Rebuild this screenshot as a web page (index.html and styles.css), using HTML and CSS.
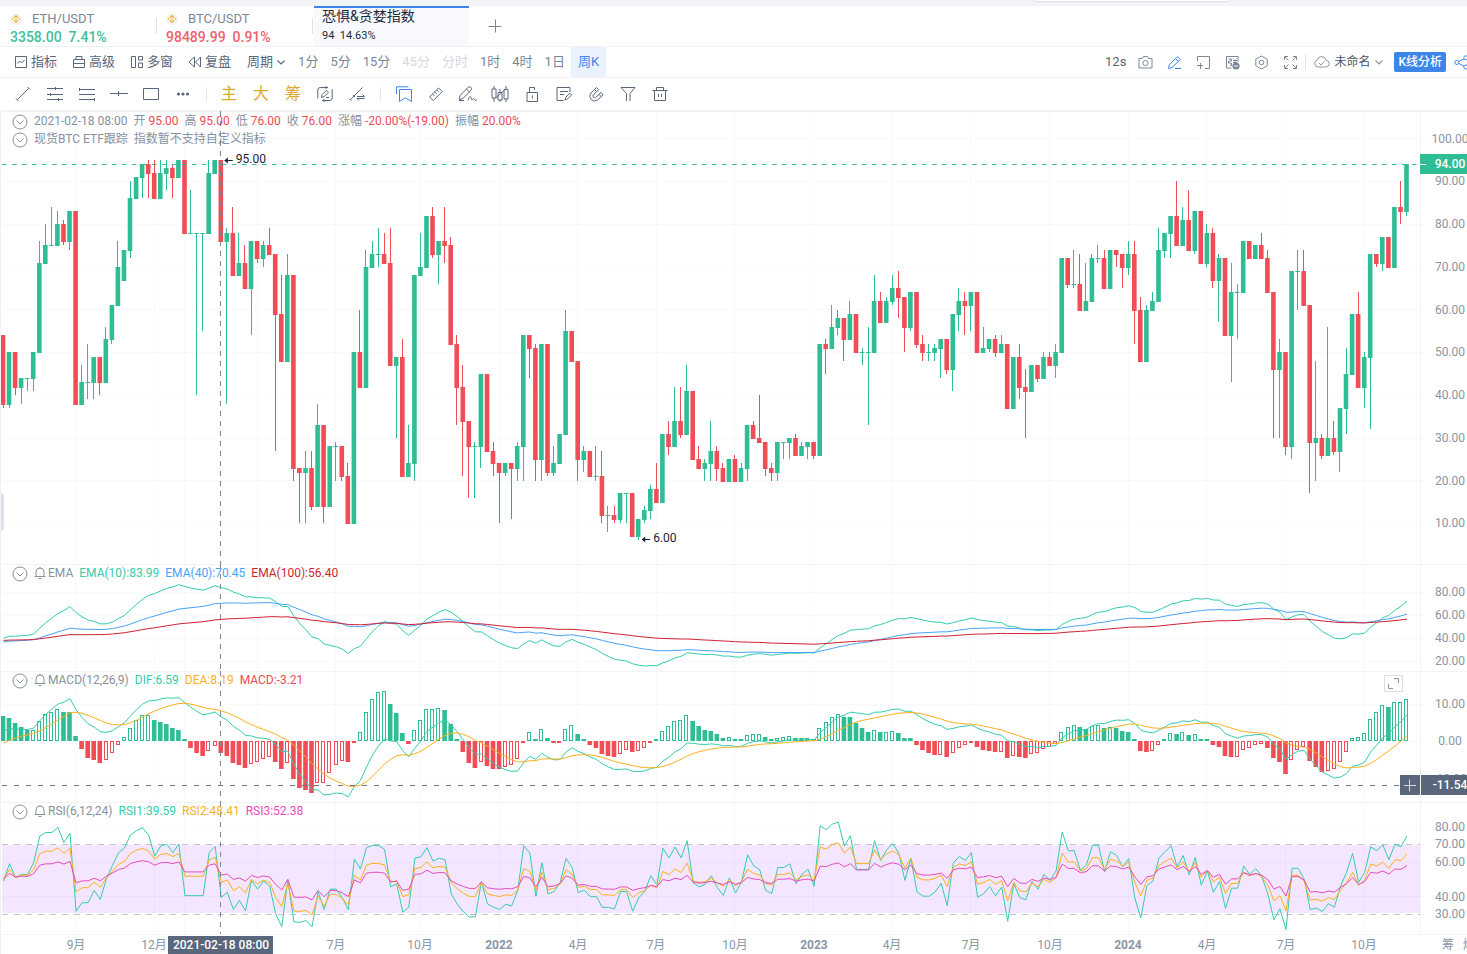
FILE: index.html
```
<!DOCTYPE html>
<html lang="zh-CN">
<head>
<meta charset="utf-8">
<title>恐惧&amp;贪婪指数</title>
<link rel="stylesheet" href="styles.css">
</head>
<body>
<svg class="defs" aria-hidden="true">
  <symbol id="coin" viewBox="0 0 12 12"><circle cx="6" cy="6" r="6" fill="#f3f4f6"/><path d="M3.800 4.700 6 2.700l2.200 2M3.800 7.300 6 9.300l2.200-2M1.900 6h1.300M8.800 6h1.300" fill="none" stroke="#f5b52e" stroke-width="1.300"/><path d="M6 4.900 7.100 6 6 7.100 4.900 6z" fill="#f5b52e"/></symbol>
  <symbol id="fold" viewBox="0 0 16 16"><circle cx="8" cy="8" r="7"/><path d="M4.500 6.500 8 10l3.500-3.500"/></symbol>
  <symbol id="bell" viewBox="0 0 12 14"><path d="M.5 10.500h11M2 10.500V6a4 4 0 0 1 8 0v4.500M4.500 12.500h3M6 .8V2"/></symbol>
  <symbol id="down" viewBox="0 0 10 10"><path d="M1.500 3.500 5 7l3.500-3.500"/></symbol>
</svg>

<div class="strip"><div class="strip-box"></div></div>

<nav class="tabs">
  <a class="tab" href="#"><span class="name"><svg class="coin"><use href="#coin"/></svg>ETH/USDT</span><span class="quote up">3358.00  7.41%</span></a>
  <a class="tab" href="#"><span class="name"><svg class="coin"><use href="#coin"/></svg>BTC/USDT</span><span class="quote down">98489.99  0.91%</span></a>
  <a class="tab active" href="#"><span class="title">恐惧&amp;贪婪指数</span><span class="sub">94&nbsp; 14.63%</span></a>
  <button class="add" aria-label="添加"><svg viewBox="0 0 14 14"><path d="M7.500 .5v13M.5 7.500h13"/></svg></button>
</nav>

<div class="bar">
  <div class="tools">
    <button><svg class="i" viewBox="0 0 14 14"><path d="M1.500 1.500h11v11h-11zM3.500 8.500l2-2.500 2 2 3-3"/></svg>指标</button>
    <button><svg class="i" viewBox="0 0 14 14"><path d="M1.500 4.500h11v8h-11zM4 4.500v-3h6v3M1.500 8.500h11"/></svg>高级</button>
    <button><svg class="i" viewBox="0 0 14 14"><path d="M1.500 1.500h4v11h-4zM8.500 1.500h4v3.500h-4zM8.500 8h4v4.500h-4z"/></svg>多窗</button>
    <button><svg class="i" viewBox="0 0 14 14"><path d="M6.500 2v10L1 7zM12.500 2v10L7.500 7z"/></svg>复盘</button>
    <button>周期<svg class="chev" viewBox="0 0 10 10"><use href="#down"/></svg></button>
  </div>
  <div class="periods">
    <button>1分</button><button>5分</button><button>15分</button><button disabled>45分</button><button disabled>分时</button><button>1时</button><button>4时</button><button>1日</button><button class="on">周K</button>
  </div>
  <div class="right">
    <span class="timer">12s</span>
    <button aria-label="截图"><svg class="r" viewBox="0 0 15 15"><path d="M1 3.500h3.500l1-2h4l1 2H14v9.500H1z"/><circle cx="7.500" cy="8" r="2.600"/></svg></button>
    <button aria-label="画线"><svg class="r blue" viewBox="0 0 15 15"><path d="M1.500 13.500l.8-3.700L10.500 1.600l2.800 2.800-8.200 8.200zM8.500 3.600l2.800 2.800M8 13.500h6"/></svg></button>
    <button aria-label="新增窗口"><svg class="r" viewBox="0 0 15 15"><path d="M1.500 6.500V1.500h12v12H9M1 10.500h6M4.500 8v6"/></svg></button>
    <button aria-label="弹幕"><svg class="r" viewBox="0 0 15 15"><path d="M6.500 13H1.500V1.500h11.500V7M3.500 4h3v2h-3v2h3v2.500H5M8 3.500l1 1M11.500 3.500l-1 1M8 5.500h4M8 7.500h4M10 5v5"/><circle cx="11" cy="11" r="3.600" fill="#7d8797" stroke="none"/><path d="M9 11h4" stroke="#fff"/></svg></button>
    <button aria-label="设置"><svg class="r" viewBox="0 0 15 15"><path d="M7.500 1l5.700 3.200v6.600L7.500 14l-5.700-3.200V4.200z"/><circle cx="7.500" cy="7.500" r="2.300"/></svg></button>
    <button aria-label="全屏"><svg class="r" viewBox="0 0 15 15"><path d="M1.500 5V1.500H5M2 2l3.500 3.500M13.500 5V1.500H10M13 2 9.500 5.500M1.500 10v3.500H5M2 13l3.500-3.500M13.500 10v3.500H10M13 13 9.500 9.500"/></svg></button>
    <span class="rule"></span>
    <button class="layout"><svg class="cloud" viewBox="0 0 17 14"><path d="M5 12a3.600 3.600 0 0 1-.8-7A4.500 4.500 0 0 1 13 5.200 3.400 3.400 0 0 1 12.600 12zM6 8l2 2 3.500-3.500"/></svg>未命名<svg class="chev" viewBox="0 0 10 10"><use href="#down"/></svg></button>
    <button class="primary">K线分析</button>
    <button class="share" aria-label="分享"><svg class="r blue" viewBox="0 0 15 15"><circle cx="2.800" cy="7.500" r="2"/><circle cx="11.800" cy="2.800" r="2"/><circle cx="11.800" cy="12" r="2"/><path d="M4.600 6.600 10 3.700M4.600 8.400l5.400 2.700"/></svg></button>
  </div>
</div>

<div class="bar draw">
  <button aria-label="线段"><svg viewBox="0 0 16 16"><path d="M2.500 13.500l11-11M1 12.500 3.500 15M12.500 1 15 3.500"/></svg></button>
  <button aria-label="水平线"><svg viewBox="0 0 16 16"><path d="M0 2.500h16M0 8.500h16M0 13.500h16M8.500 1v3M3.500 7v3M11.500 12v3"/></svg></button>
  <button aria-label="射线"><svg viewBox="0 0 16 16"><path d="M0 3.500h16M0 8.500h16M0 13.500h16M.5 2v3M15.500 12v3"/></svg></button>
  <button aria-label="横线"><svg viewBox="0 0 18 16"><path d="M0 7.500h18M8.500 5v5"/></svg></button>
  <button aria-label="矩形"><svg viewBox="0 0 16 16"><path d="M.5 2.500h15v11H.5z"/></svg></button>
  <button aria-label="更多"><svg viewBox="0 0 16 16"><g fill="#59667b" stroke="none"><circle cx="3.500" cy="8" r="1.600"/><circle cx="8" cy="8" r="1.600"/><circle cx="12.500" cy="8" r="1.600"/></g></svg></button>
  <span class="rule"></span>
  <button class="gold">主</button><button class="gold">大</button><button class="gold">筹</button>
  <button aria-label="更新画线"><svg viewBox="0 0 16 16"><path d="M.8 11V4a2.500 2.500 0 0 1 2.500-2.500H11M9 0v3M15.200 5v7a2.500 2.500 0 0 1-2.500 2.500H5M7 13v3M.8 11v1.500M15.200 5V3.500M4.500 11.500l.5-2.700L9.500 4.300l2 2L7 10.800zM9 11.500h3"/></svg></button>
  <button aria-label="切换线"><svg viewBox="0 0 16 16"><path d="M1.500 13.500l12-12M0 12.500 2.500 15M4 9l2 2M8 10.500h7.500L13.500 8.500M15.500 12.500H8l2 2"/></svg></button>
  <span class="rule"></span>
  <button aria-label="收藏"><svg class="blue" viewBox="0 0 16 16"><path d="M.5 8V.8h12M3.500 3.500h12v12L9.500 11.800l-6 3.700z"/></svg></button>
  <button aria-label="测量"><svg viewBox="0 0 16 16"><path d="M1.500 11 10.500 2l3.800 3.500-9 9zM4.500 8l1.800 1.800M6.700 6l1.800 1.800M9 4l1.800 1.800"/></svg></button>
  <button aria-label="画笔"><svg viewBox="0 0 18 16"><path d="M0 14l1.300-4.800L9 1.500a2 2 0 0 1 3 2.700L4.500 12zM7.500 3.300l2.700 2.500M0 14.500h5M9 14.500c1-4 2.500-5 3-3s.5 3 1.500 2 1.500-1 2 0 1 1 2.500.3"/></svg></button>
  <button aria-label="K线样式"><svg viewBox="0 0 18 16"><path d="M1 3h4v9H1zM7 6.500h4V14H7zM13 3.500h4V13h-4zM3 0v3M3 12v4M9 3v3.500M9 14v2M15 0v3.500M15 13v3M5 12l9-8.500"/></svg></button>
  <button aria-label="锁定"><svg viewBox="0 0 16 16"><path d="M3 6.500h10.500v9H3zM5.500 6.500v-5h5v2.500M8.300 9.500v3"/></svg></button>
  <button aria-label="编辑"><svg viewBox="0 0 16 16"><path d="M7.500 14.500H1v-13h13V6M4 5.500h8M4 8.500h4M9 14l.8-2.800 4-4 1.700 1.700-4 4z"/></svg></button>
  <button aria-label="磁铁"><svg viewBox="0 0 16 16"><path d="M8.500 1.500 3 7a4.800 4.800 0 0 0 6.500 7L15 8.800l-2-2.300-5.500 5a1.700 1.700 0 0 1-2.300-2.400l5.400-5.400zM11 8.300l2 2.200M6.500 3.500l2.200 2.200"/></svg></button>
  <button aria-label="筛选"><svg viewBox="0 0 16 16"><path d="M1 1.500h14l-5 6V15M1 1.500l5.500 6V15"/></svg></button>
  <button aria-label="删除"><svg viewBox="0 0 16 16"><path d="M.5 4.500h15M2.500 4.500v10h11v-10M4.500 4.500v-3h7v3M6.500 8v3M9.500 8v3"/></svg></button>
</div>

<main class="chart" id="chart">
  <section class="pane price" data-base="453">
    <svg class="plot"></svg>
    <div class="legend"><svg class="fold"><use href="#fold"/></svg><span class="g">2021-02-18 08:00</span><span class="g">开 <b class="down">95.00</b></span><span class="g">高 <b class="down">95.00</b></span><span class="g">低 <b class="down">76.00</b></span><span class="g">收 <b class="down">76.00</b></span><span class="g">涨幅 <b class="down">-20.00%(-19.00)</b></span><span class="g">振幅 <b class="down">20.00%</b></span></div>
    <div class="legend"><svg class="fold"><use href="#fold"/></svg><span class="g">现货BTC ETF跟踪</span><span class="g">指数暂不支持自定义指标</span></div>
  </section>
  <section class="pane ema" data-base="107">
    <svg class="plot"></svg>
    <div class="legend"><svg class="fold"><use href="#fold"/></svg><svg class="bell"><use href="#bell"/></svg><span class="g">EMA</span><span class="g teal">EMA(10):83.99</span><span class="g sky">EMA(40):70.45</span><span class="g crimson">EMA(100):56.40</span></div>
  </section>
  <section class="pane macd" data-base="131">
    <svg class="plot"></svg>
    <div class="legend"><svg class="fold"><use href="#fold"/></svg><svg class="bell"><use href="#bell"/></svg><span class="g">MACD(12,26,9)</span><span class="g teal">DIF:6.59</span><span class="g orange">DEA:8.19</span><span class="g down">MACD:-3.21</span></div>
    <button class="expand" aria-label="放大"><svg viewBox="0 0 17 15"><path d="M9 2.500h4.500V7M3.500 8v4.500H8"/></svg></button>
  </section>
  <section class="pane rsi" data-base="132">
    <svg class="plot"></svg>
    <div class="legend"><svg class="fold"><use href="#fold"/></svg><svg class="bell"><use href="#bell"/></svg><span class="g">RSI(6,12,24)</span><span class="g teal">RSI1:39.59</span><span class="g orange">RSI2:48.41</span><span class="g pink">RSI3:52.38</span></div>
  </section>
  <section class="pane time" data-base="20">
    <svg class="plot"></svg>
  </section>
  <div class="handle"></div>
</main>
<script src="chart.js"></script>
</body>
</html>
```

FILE: styles.css
```
* { box-sizing: border-box; }
body {
  margin: 0;
  height: 100vh;
  display: flex;
  flex-direction: column;
  overflow: hidden;
  background: #fff;
  color: #59667b;
  font: 12px/18px Roboto, "Noto Sans CJK SC", sans-serif;
}
button {
  margin: 0;
  padding: 0;
  border: 0;
  background: none;
  color: inherit;
  font: inherit;
  white-space: nowrap;
}
a { color: inherit; text-decoration: none; }
svg { flex: none; fill: none; stroke: currentColor; }
.defs { position: absolute; width: 0; height: 0; }

.strip { flex: none; height: 6px; background: #f2f4f8; }
.strip-box { width: 196px; height: 2px; margin-left: 1033px; background: #fff; border: solid #dde0e6; border-width: 0 1px 1px; border-radius: 0 0 3px 3px; }

.tabs { flex: none; display: flex; height: 41px; border-bottom: 1px solid #eff1f4; }
.tab { display: flex; flex-direction: column; width: 156px; padding: 3px 0 0 10px; position: relative; }
.tab:not(.active)::after { content: ""; position: absolute; right: -1px; top: 12px; height: 16px; border-right: 1px solid #dfe2e8; }
.name { display: flex; align-items: center; height: 19px; font-size: 13px; color: #7b8697; }
.coin { width: 12px; height: 12px; margin-right: 10px; stroke: none; }
.quote { font-size: 14px; font-weight: 500; white-space: pre; }
.tab .up { color: #3fc09b; }
.tab .down { color: #f0616b; }
.tab.active { width: 155px; margin-left: 2px; padding: 0 0 0 8px; background: #f7f9fc; border-top: 2px solid #3c86ea; color: #1f2b3d; }
.title { font-size: 14px; line-height: 17px; }
.sub { font-size: 11px; line-height: 22px; }
.add { margin-left: 19px; width: 14px; color: #7b8697; }
.add svg { display: block; width: 14px; height: 14px; }

.bar { flex: none; display: flex; align-items: stretch; height: 31px; border-bottom: 1px solid #eff1f4; font-size: 13px; }
.bar button { display: flex; align-items: center; }
.tools { display: flex; gap: 15px; padding-left: 14px; }
.tools button { gap: 3px; }
.tools button:last-child { margin-left: 1px; }
.i { width: 14px; height: 14px; }
.chev { width: 10px; height: 10px; stroke-width: 1.2; }
.periods { display: flex; margin-left: 6px; color: #7b8697; }
.periods button { padding: 0 6px; }
.periods button:disabled { color: #d5d8dd; }
.periods .on { padding: 0 7px; background: #eaf2fd; color: #3c86ea; }
.right { display: flex; align-items: center; gap: 14px; margin: 0 -2px 0 auto; color: #7d8797; }
.timer { color: #59667b; margin-right: -2px; }
.r { display: block; width: 15px; height: 15px; }
.blue { color: #3c86ea; }
.rule { width: 1px; height: 16px; background: #dfe2e8; }
.right .rule { margin: 0 -7px; }
.layout { gap: 4px; font-size: 12px; color: #4a5568; }
.cloud { width: 17px; height: 14px; color: #8b95a3; }
.layout .chev { color: #8b95a3; }
.right .primary { height: 20px; margin-left: -4px; padding: 0 4px; border-radius: 2px; background: #3c86ea; color: #fff; font-size: 12px; font-weight: 500; }
.share { margin-left: -6px; }

.draw { height: 33px; padding-left: 7px; align-items: center; }
.draw button { width: 32px; height: 32px; justify-content: center; }
.draw svg { width: 18px; height: 16px; }
.draw .rule { height: 14px; margin: 0 7px; background: #e3e6ec; }
.draw .rule:nth-of-type(1) { margin-right: 6px; }
.draw .gold { font-size: 16px; color: #d9a928; }

.chart { flex: 1; display: flex; flex-direction: column; position: relative; min-height: 0; border-left: 1px solid #eef1f6; overflow: hidden; }
.pane { position: relative; min-height: 0; flex-basis: 0; overflow: hidden; }
.price { flex-grow: 453; padding-top: 1px; }
.ema { flex-grow: 107; }
.macd { flex-grow: 131; }
.rsi { flex-grow: 132; }
.time { flex-grow: 20; }
.plot { position: absolute; top: 0; left: 0; width: 100%; height: 100%; stroke: none; }
.plot text { font: 12px Roboto, "Noto Sans CJK SC", sans-serif; fill: #8a95a5; }
.plot .year { font-weight: 700; }
.plot .light { fill: #fff; font-weight: 500; }
.plot .dark { fill: #17233a; }
.legend { position: relative; display: flex; align-items: center; height: 18px; padding-left: 11px; color: #87919f; white-space: nowrap; }
.legend b { font-weight: 400; }
.g { margin-right: 6px; }
.fold { width: 16px; height: 16px; margin: 2px 6px 0 0; color: #87919f; }
.bell { width: 12px; height: 14px; margin-right: 2px; color: #87919f; }
.legend .down { color: #ec4b57; }
.teal { color: #33cdae; }
.sky { color: #47a3fa; }
.crimson { color: #cf1f30; }
.orange { color: #fbb01b; }
.pink { color: #e64cbd; }
.expand { position: absolute; top: 4px; right: 64px; width: 19px; height: 17px; border: 1px solid #dcdee3; color: #87919f; }
.expand svg { display: block; width: 17px; height: 15px; }
.handle { position: absolute; left: -1px; top: 382px; width: 4px; height: 38px; border-radius: 0 3px 3px 0; background: linear-gradient(#8a93a1, #8a93a1) 0 15px / 1px 8px no-repeat #dde1e8; }
```

FILE: chart.js
```
// Weekly candles: colour, body top, body bottom, high, low
var raw = 'r54 38 54 37,g50 38 50 37,r50 42 50 40,g44 42 44 38,g44 44 44 41,g50 44 50 41,g71 50 76 50,g75 71 80 71,g75 75 84 75,g80 75 83 75,r80 76 81 75,g83 76 83 74,r83 38 83 38,g43 38 47 38,g43 43 52 39,g49 43 49 39,r49 43 49 40,g53 43 56 43,g61 53 61 52,g70 61 76 61,g74 67 74 67,g86 74 90 72,g91 86 91 86,g94 91 94 86,r94 92 95 86,r92 86 95 86,g92 86 95 86,g93 92 95 88,r93 91 94 86,g95 91 95 91,' +
'r95 78 95 78,g78 78 88 78,g78 78 78 40,g78 78 78 55,g92 78 95 78,g95 92 95 92,r95 76 95 76,g78 76 79 38,r78 68 84 68,g71 68 78 68,r71 65 75 65,g76 65 76 54,r76 72 76 71,g75 72 76 70,r75 73 79 73,r73 59 73 27,r59 48 68 48,g68 48 73 48,r68 23 68 20,r23 22 23 10,g23 22 27 10,r23 14 27 13,g33 14 38 14,r33 14 33 10,g28 14 28 14,g28 28 29 20,r28 21 28 20,r21 10 24 10,g50 10 50 10,r50 42 60 42,' +
'g70 42 74 42,g73 70 76 70,g73 73 79 70,r73 71 78 71,r71 47 79 47,g49 47 49 30,r49 21 53 21,g24 21 33 21,g68 24 68 20,g70 68 78 68,g82 70 82 70,r82 73 84 72,g76 73 76 66,r76 75 84 71,r75 52 77 52,r52 42 54 33,r42 34 47 21,r34 28 34 16,g28 28 29 16,g45 28 45 23,r45 27 45 27,r27 24 29 21,r24 22 24 10,g24 22 24 21,r24 23 24 11,g28 23 29 20,g54 28 54 20,r54 51 54 44,r51 25 52 20,g52 25 52 20,' +
'r52 22 52 21,g24 22 28 21,g31 24 31 24,g55 31 60 31,r55 48 55 48,r48 25 48 20,g27 25 28 22,r27 21 27 21,g21 21 28 20,r21 12 27 10,g12 12 14 8,r12 11 14 10,g17 11 17 10,g17 17 17 10,r17 7 17 7,g11 7 11 6,g13 11 14 10,g18 13 19 11,r18 15 24 15,g31 15 31 15,r31 28 34 26,g34 28 42 28,r34 31 42 30,g41 31 47 31,r41 25 41 25,r25 23 28 23,g24 23 25 20,g27 24 34 20,r27 23 28 20,r23 20 24 20,' +
'g25 20 25 20,r25 20 26 20,g23 20 24 20,g33 23 33 20,r33 30 34 30,r30 29 40 29,r29 23 29 21,r23 22 24 20,g29 22 29 20,g29 29 29 25,g30 29 30 25,r30 26 31 26,g28 26 29 26,g29 28 29 25,r29 26 29 25,g52 26 52 26,r52 51 53 45,g56 51 61 51,g58 56 60 54,r58 53 58 48,g59 53 62 53,r59 50 59 50,g50 50 51 47,g50 50 56 33,g62 50 68 50,r62 57 64 57,g62 57 63 57,g65 62 68 61,r65 63 69 58,r63 56 63 50,' +
'g64 56 64 55,r64 52 64 51,r52 50 54 48,g50 50 52 48,g51 50 52 48,g53 51 53 44,r53 46 53 45,g59 46 59 41,g62 59 65 55,r62 61 64 54,g64 61 64 55,r64 50 64 50,g51 50 56 50,g53 51 53 50,r53 50 54 49,g52 50 54 50,r52 37 52 37,g49 37 49 37,r49 42 52 39,r42 41 46 30,g47 41 47 41,r47 44 47 43,g49 44 50 44,r49 47 50 47,g50 47 52 44,g72 50 72 50,r72 66 72 65,g66 66 74 65,r66 60 73 60,g62 60 71 60,' +
'g72 62 73 62,g72 72 75 71,r72 65 74 65,g74 65 74 65,r74 73 74 70,r73 70 73 65,g73 70 76 68,r73 60 76 52,r60 48 63 48,g60 48 61 48,g62 60 64 60,g74 62 79 62,g78 74 78 72,g82 78 82 72,r82 75 90 75,g81 75 84 75,r81 74 88 74,g83 74 83 73,r83 71 83 71,g78 71 80 70,r78 67 79 65,g72 67 73 57,r72 54 72 54,g64 54 71 43,g64 64 66 53,g76 64 76 64,r76 72 76 72,g75 72 75 72,r75 72 78 72,r72 64 74 64,' +
'r64 46 64 30,g50 46 53 30,r50 28 50 26,g69 28 69 25,g69 69 74 60,r69 61 74 61,r61 29 61 17,g30 29 48 20,r30 26 31 25,g30 26 56 26,r30 27 34 26,g37 27 37 22,g45 37 51 31,g59 45 59 45,r59 42 64 42,g49 42 50 37,g73 49 73 32,r73 71 73 70,g77 71 77 69,r77 70 77 70,g84 70 84 70,r84 83 90 80,g94 83 94 82';

var candles = raw.split(',').map(function (s) {
  var p = s.slice(1).split(' ').map(Number);
  return { up: s[0] === 'g', top: p[0], bot: p[1], hi: p[2], lo: p[3] };
});
var close = candles.map(function (c) { return c.up ? c.top : c.bot; });
var CUR = 36;

function ema(src, n, seed) {
  var a = 2 / (n + 1), out = [seed];
  for (var i = 1; i < src.length; i++) out.push(out[i - 1] + a * (src[i] - out[i - 1]));
  return out;
}
// Starting value of an EMA whose value is known at candle `at`
function seedFrom(src, n, at, value) {
  var a = 2 / (n + 1);
  for (var i = at; i > 0; i--) value = (value - a * src[i]) / (1 - a);
  return value;
}
function rsi(n, seed, size) {
  var u = seed * size, t = size, out = [seed * 100];
  for (var i = 1; i < close.length; i++) {
    var d = close[i] - close[i - 1];
    u = (u * (n - 1) + Math.max(d, 0)) / n;
    t = (t * (n - 1) + Math.abs(d)) / n;
    out.push(100 * u / t);
  }
  return out;
}

var ema10 = ema(close, 10, 40);
var ema40 = ema(close, 40, seedFrom(close, 40, CUR, 70.45));
var ema100 = ema(close, 100, seedFrom(close, 100, CUR, 56.4));
var ema12 = ema(close, 12, 39.6);
var ema26 = ema(close, 26, seedFrom(close, 26, CUR, ema12[CUR] - 6.59));
var dif = ema12.map(function (v, i) { return v - ema26[i]; });
var dea = ema(dif, 9, -0.4);
var hist = dif.map(function (v, i) { return 2 * (v - dea[i]); });

var GREEN = '#2ebd94', RED = '#f04d56', GRID = 'rgba(30,50,90,.03)', LINE = '#f1f3f5';
var MONTHS = [[12, '9月'], [25, '12月'], [30, ''], [42, ''], [55, '7月'], [69, '10月'], [82, '2022'], [95, '4月'], [108, '7月'], [121, '10月'], [134, '2023'], [147, '4月'], [160, '7月'], [173, '10月'], [186, '2024'], [199, '4月'], [212, '7月'], [225, '10月']];

function seg(x1, y1, x2, y2, color, extra) {
  return '<path d="M' + x1 + ' ' + y1 + 'L' + x2 + ' ' + y2 + '" stroke="' + color + '" fill="none" ' + (extra || '') + '/>';
}
function box(x, y, w, h, color) {
  return '<rect x="' + x + '" y="' + y + '" width="' + w + '" height="' + h + '" fill="' + color + '"/>';
}
function label(x, y, text, cls, anchor) {
  return '<text x="' + x + '" y="' + y + '" text-anchor="' + (anchor || 'middle') + '" class="' + (cls || '') + '">' + text + '</text>';
}
function crisp(v) { return Math.floor(v) + 0.5; }

function draw() {
  var W = document.getElementById('chart').clientWidth;
  var right = W - 47, mid = right + 30;
  var pitch = (right - 15.5) / (candles.length - 1);
  function X(i) { return 2 + pitch * i; }
  function curve(data, Y, color) {
    return '<polyline fill="none" stroke="' + color + '" points="' + data.map(function (v, i) { return (X(i) + 0.5).toFixed(1) + ',' + Y(v).toFixed(1); }).join(' ') + '"/>';
  }
  function grid(H) {
    var s = MONTHS.map(function (m) { return seg(crisp(X(m[0])), 0, crisp(X(m[0])), H, GRID); }).join('');
    return s + seg(right + 0.5, 0, right + 0.5, H, LINE) + seg(1, 0.5, W, 0.5, LINE);
  }
  function rows(vals, Y) {
    return vals.map(function (v) {
      return seg(1, crisp(Y(v)), right + 5, crisp(Y(v)), GRID) + label(mid, Math.round(Y(v) - 0.25) + 4, v.toFixed(2));
    }).join('');
  }
  function cross(H) { return seg(crisp(X(CUR)), 0, crisp(X(CUR)), H, '#7d8797', 'stroke-dasharray="5 5"'); }
  function pane(name, build) {
    var el = document.querySelector('.' + name), H = el.clientHeight;
    el.querySelector('.plot').innerHTML = build(H, H / el.dataset.base);
  }

  pane('price', function (H, k) {
    function Y(v) { return (70.5 + (90 - v) * 4.275) * k; }
    var s = grid(H) + rows([100, 90, 80, 70, 60, 50, 40, 30, 20, 10], Y);
    candles.forEach(function (c, i) {
      var col = c.up ? GREEN : RED, x = X(i), t = Math.round(Y(c.top) - 0.2), b = Math.round(Y(c.bot) - 0.2) + 1;
      s += box(Math.floor(x), Math.round(Y(c.hi) - 0.2), 1, Math.max(1, Math.round(Y(c.lo) - 0.2) - Math.round(Y(c.hi) - 0.2)), col);
      s += box((x - 2.3).toFixed(1), t, 4.6, b - t, col);
    });
    var last = crisp(Y(94)), hx = X(CUR) + 4, lx = X(105) + 4;
    s += seg(1, last, right, last, GREEN, 'stroke-dasharray="4.5 5.5"');
    s += box(right, last - 10.5, 60, 20, '#2ebd94') + seg(right, last, right + 6, last, '#fff') + label(mid, last + 3.5, '94.00', 'light');
    var a = crisp(Y(95)), c = crisp(Y(6)) - 1;
    s += seg(hx, a, hx + 8, a, '#17233a') + '<path d="M' + (hx + 3) + ' ' + (a - 3) + 'l-3.500 3 3.500 3z" fill="#17233a"/>' + label(hx + 11, a + 2.5, '95.00', 'dark', 'start');
    s += seg(lx, c, lx + 8, c, '#17233a') + '<path d="M' + (lx + 3) + ' ' + (c - 3) + 'l-3.500 3 3.500 3z" fill="#17233a"/>' + label(lx + 11, c + 2.5, '6.00', 'dark', 'start');
    return s + cross(H);
  });

  pane('ema', function (H, k) {
    function Y(v) { return (28.3 + (80 - v) * 1.15) * k; }
    return grid(H) + rows([80, 60, 40, 20], Y) + curve(ema10, Y, '#33cdae') + curve(ema40, Y, '#47a3fa') + curve(ema100, Y, '#cf1f30') + cross(H);
  });

  pane('macd', function (H, k) {
    function Y(v) { return (70.6 - v * 3.75) * k; }
    var s = grid(H) + rows([10, 0, -10], Y), zero = Math.round(70 * k);
    hist.forEach(function (v, i) {
      var col = v >= 0 ? GREEN : RED, x = Math.round(X(i) - 2.2), h = Math.max(2, Math.round(Math.abs(v) * 3.75 * k));
      var y = v >= 0 ? zero - h : zero;
      if (i && v >= hist[i - 1]) s += '<rect x="' + (x + 0.5) + '" y="' + (y + 0.5) + '" width="3" height="' + (h - 1) + '" fill="#fff" stroke="' + col + '"/>';
      else s += box((X(i) - 2.3).toFixed(1), y, 4.6, h, col);
    });
    s += curve(dif, Y, '#33cdae') + curve(dea, Y, '#fbb01b');
    var y = crisp(114 * k);
    s += seg(1, y, right - 20, y, '#6d7787', 'stroke-dasharray="5 7"') + cross(H);
    s += box(right - 20, y - 10.5, 20, 20, '#59667b') + box(right + 1, y - 10.5, 60, 20, '#59667b');
    s += seg(right - 16, y, right - 4, y, '#d8dde4') + seg(right - 10.5, y - 6, right - 10.5, y + 6, '#d8dde4');
    return s + label(mid, y + 3.5, '-11.54', 'light');
  });

  pane('rsi', function (H, k) {
    function Y(v) { return (25.2 + (80 - v) * 1.74) * k; }
    var s = box(1, Y(69.7), right - 1, Y(30.7) - Y(69.7), '#f4e6fe');
    s += grid(H) + rows([80, 70, 60, 40, 30], Y) + seg(1, crisp(Y(20)), right + 5, crisp(Y(20)), GRID);
    [70, 30].forEach(function (v) { s += seg(1, crisp(Y(v)), right, crisp(Y(v)), '#c3c3c3', 'stroke-dasharray="6 6"'); });
    return s + curve(rsi(6, 0.49, 9.8), Y, '#33cdae') + curve(rsi(12, 0.5, 8.5), Y, '#fbb01b') + curve(rsi(24, 0.505, 8.5), Y, '#e64cbd') + cross(H);
  });

  pane('time', function () {
    var s = seg(1, 0.5, W, 0.5, LINE), x = Math.round(X(CUR));
    MONTHS.forEach(function (m) { s += label(Math.round(X(m[0])), 15, m[1], m[1].length === 4 ? 'year' : ''); });
    s += box(x - 53, 2, 105, 18, '#59667b') + label(x, 15, '2021-02-18 08:00', 'light');
    return s + label(right + 28, 15, '筹') + label(right + 49, 15, '爆');
  });
}
draw();
window.addEventListener('resize', draw);
```
